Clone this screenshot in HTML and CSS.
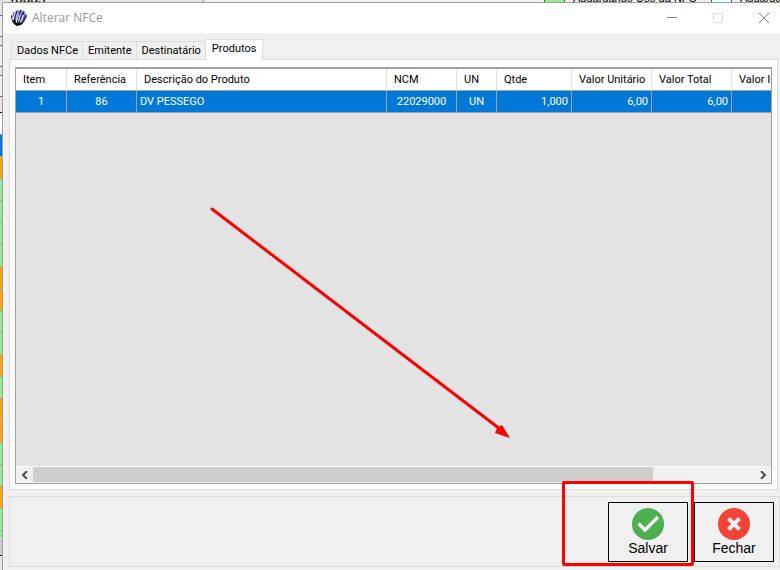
FILE: index.html
```
<!DOCTYPE html>
<html lang="pt-BR">
<head>
<meta charset="utf-8">
<title>Alterar NFCe</title>
<link rel="stylesheet" href="styles.css">
</head>
<body>
<div class="backdrop" aria-hidden="true">
  <div class="back-top">
    <span class="back-title">Todas</span>
    <span class="back-swatch green"></span>
    <span class="back-label">Aguardando Uso da NFC</span>
    <span class="back-swatch cyan"></span>
    <span class="back-label">Aguarda</span>
  </div>
  <div class="back-side">
    <i class="field"></i><i class="field"></i><i class="field"></i>
    <i class="rule"></i>
    <i class="row"></i><i class="row blue"></i><i class="row orange"></i>
    <i class="row green"></i><i class="row green"></i><i class="row green"></i><i class="row green"></i>
    <i class="row orange"></i><i class="row orange"></i>
    <i class="row green"></i><i class="row green"></i><i class="row orange"></i><i class="row green"></i>
    <i class="row orange"></i><i class="row orange"></i>
    <i class="row green"></i><i class="row green"></i><i class="row orange"></i><i class="row green"></i>
    <i class="row green last"></i><i class="bar"></i>
  </div>
</div>

<main class="window">
  <header class="titlebar">
    <svg class="logo" viewBox="0 0 16 16" aria-hidden="true">
      <path fill="#20207c" d="M5 1 7 0 5 6 4 11 2 13 3 7zM9 0l2 0-3 7-1 5-2 2 1-6zM12 1l2 1-3 6-1 5-2 1 1-6zM15 4l1 2-2 4-1 2-2 1 1-4z"/>
      <path fill="#5a5ab8" d="M2 3 4 2 3 6 1 9zM7 1l1 0-2 7-1 1zM11 1l1 1-3 6-1 1zM14 3l1 1-3 5-1 1z"/>
      <path fill="#000" d="M0 6 1 5 1 9 3 11 4 8 5 12 7 13 8 10 9 13 11 12 12 10 12 13 10 15 6 16 3 14 1 11z"/>
      <path stroke="#fff" stroke-width=".8" d="M2 10 4 3M5 13 8 4M9 13l3-8"/>
    </svg>
    <h1>Alterar NFCe</h1>
    <div class="controls">
      <button type="button" aria-label="Minimizar"><svg viewBox="0 0 12 12"><path d="M1 5.500H11"/></svg></button>
      <button type="button" aria-label="Maximizar" disabled><svg viewBox="0 0 12 12"><path d="M1.500 1.500H10.500V10.500H1.500z"/></svg></button>
      <button type="button" aria-label="Fechar janela"><svg viewBox="0 0 12 12"><path d="M1 1 11 11M11 1 1 11"/></svg></button>
    </div>
  </header>

  <div class="tabs" role="tablist">
    <button type="button" role="tab" class="tab">Dados NFCe</button>
    <button type="button" role="tab" class="tab">Emitente</button>
    <button type="button" role="tab" class="tab">Destinatário</button>
    <button type="button" role="tab" class="tab active" aria-selected="true">Produtos</button>
  </div>

  <section class="panel">
    <div class="grid">
      <div class="grid-view">
        <table>
          <colgroup>
            <col class="w-item"><col class="w-code"><col class="w-desc"><col class="w-code"><col class="w-un"><col class="w-qty"><col class="w-val"><col class="w-val"><col class="w-val">
          </colgroup>
          <thead>
            <tr><th>Item</th><th>Referência</th><th>Descrição do Produto</th><th>NCM</th><th>UN</th><th>Qtde</th><th>Valor Unitário</th><th>Valor Total</th><th>Valor ICMS</th></tr>
          </thead>
          <tbody>
            <tr><td class="mid">1</td><td class="mid">86</td><td>DV PESSEGO</td><td class="mid">22029000</td><td class="mid">UN</td><td class="num">1,000</td><td class="num">6,00</td><td class="num">6,00</td><td></td></tr>
          </tbody>
        </table>
      </div>
      <div class="scrollbar">
        <button type="button" aria-label="Rolar para a esquerda"><svg viewBox="0 0 8 8"><path d="M6 0 2 4 6 8"/></svg></button>
        <div class="track"><div class="thumb"></div></div>
        <button type="button" aria-label="Rolar para a direita"><svg viewBox="0 0 8 8"><path d="M2 0 6 4 2 8"/></svg></button>
      </div>
    </div>
  </section>

  <footer class="actions">
    <button type="button" class="action">
      <svg viewBox="0 0 32 32" aria-hidden="true"><circle cx="16" cy="16" r="16" fill="#4caf50"/><path d="M6.500 15.500 13 22 26 9" fill="none" stroke="#f0f0f0" stroke-width="3.400"/></svg>
      Salvar
    </button>
    <button type="button" class="action">
      <svg viewBox="0 0 32 32" aria-hidden="true"><circle cx="16" cy="16" r="16" fill="#f44336"/><path d="M10.500 10.500 21.500 21.500M21.500 10.500 10.500 21.500" stroke="#f0f0f0" stroke-width="4"/></svg>
      Fechar
    </button>
    <div class="highlight"></div>
  </footer>
</main>

<svg class="arrow" viewBox="0 0 300 232" aria-hidden="true">
  <path d="M2 2 290 222" stroke="#f00" stroke-width="3" stroke-linecap="round"/>
  <path d="M300 231 285 226 287 221 292 218z" fill="#f00"/>
</svg>
</body>
</html>
```
FILE: styles.css
```
* { box-sizing: border-box; }

body {
  margin: 0;
  min-height: 100vh;
  padding: 2px 0 0 2px;
  display: flex;
  position: relative;
  overflow: hidden;
  background: #e4e4e4;
  color: #000;
  font: 11px/16px Roboto, "Liberation Sans", sans-serif;
}

button {
  margin: 0;
  padding: 0;
  border: 0;
  background: none;
  color: inherit;
  font: inherit;
}

svg { display: block; }

/* Parent window, showing past the dialog's edges */
.backdrop {
  position: absolute;
  inset: 0;
  overflow: hidden;
}

.back-top {
  display: flex;
  align-items: flex-end;
  height: 2px;
  background: linear-gradient(to right, #e4e4e4 203px, #999 203px, #999 204px, #f0f0f0 204px);
  font: 11px/14px "Liberation Sans", sans-serif;
}

.back-title {
  flex: none;
  width: 544px;
  padding-left: 8px;
  font-size: 14px;
}

.back-title, .back-label { margin-bottom: -3px; }

.back-label { flex: none; width: 146px; padding-left: 8px; white-space: nowrap; overflow: hidden; }

.back-swatch {
  flex: none;
  width: 21px;
  height: 2px;
  border: solid #555;
  border-width: 0 1px;
}

.back-swatch.green { background: #90ee90; }
.back-swatch.cyan { background: #e0ffff; }

.back-side {
  display: flex;
  flex-direction: column;
  width: 3px;
  padding-top: 13px;
}

.back-side i { flex: none; }
.field { height: 22px; margin-bottom: 8px; border: 1px solid #666; border-left: 0; background: #eee; }
.rule { height: 8px; border-bottom: 1px solid #000; }
.row { height: 22px; border-bottom: 1px solid #a0a0a0; background: #fff; }
.row.blue { background: #0078d7; }
.row.orange { background: #ffa500; }
.row.green { background: #90ee90; }
.row.last { height: 8px; border-bottom-color: #fff; }
.bar { height: 17px; border-bottom: 1px solid #000; background: #cdcdcd; }

.window {
  position: relative;
  flex: 1;
  min-width: 0;
  display: flex;
  flex-direction: column;
  border: solid #a0a0a0;
  border-width: 1px 0 0 1px;
  background: #f0f0f0;
}

.titlebar {
  display: flex;
  align-items: center;
  height: 30px;
  padding-left: 8px;
  background: #fff;
}

.logo { width: 16px; height: 16px; }

.titlebar h1 {
  flex: 1;
  margin: 0 0 0 5px;
  color: #999;
  font: 12px/16px "Open Sans", sans-serif;
}

.controls { display: flex; }

.controls button {
  display: grid;
  place-items: center;
  width: 46px;
  height: 30px;
}

.controls button:last-child { margin-right: -7px; }
.controls svg { width: 12px; height: 12px; fill: none; stroke: #888; }
.controls button:disabled svg { stroke: #ddd; }

.tabs {
  display: flex;
  align-items: flex-end;
  margin: 6px 0 0 8px;
}

.tab {
  height: 18px;
  padding: 0 4px 0 5px;
  border: 1px solid #dcdcdc;
  border-width: 1px 1px 0 0;
}

.tab:first-child { border-left-width: 1px; }

.tab.active {
  position: relative;
  height: 21px;
  margin-bottom: -1px;
  padding: 0 6px 2px;
  background: #fff;
}

.panel {
  flex: 1;
  display: flex;
  margin: 0 2px 0 6px;
  padding: 7px 5px 5px;
  border: 1px solid #dcdcdc;
  background: #fff;
}

.grid {
  flex: 1;
  min-width: 0;
  display: flex;
  flex-direction: column;
  border: 1px solid #a0a0a0;
  border-top-width: 2px;
  background: #e3e3e3;
}

.grid-view { flex: 1; overflow: hidden; }

table {
  width: 796px;
  table-layout: fixed;
  border-collapse: separate;
  border-spacing: 0;
}

.w-item { width: 51px; }
.w-code { width: 70px; }
.w-desc { width: 250px; }
.w-un { width: 40px; }
.w-qty { width: 75px; }
.w-val { width: 80px; }

th, td {
  height: 22px;
  padding: 0 3px;
  border: solid #a0a0a0;
  border-width: 0 1px 1px 0;
  text-align: left;
  font-weight: 400;
  white-space: nowrap;
}

th {
  padding: 0 7px;
  border-right-color: #e0e0e0;
  background: #fff;
}

td { background: #0078d7; color: #fff; }
.mid { text-align: center; }
.num { text-align: right; }

.scrollbar {
  display: flex;
  height: 17px;
  border-top: 1px solid #fff;
  background: #f0f0f0;
}

.scrollbar button { display: grid; place-items: center; width: 17px; }
.scrollbar svg { width: 8px; height: 8px; fill: none; stroke: #505050; stroke-width: 2; }
.track { flex: 1; }
.thumb { width: 86%; height: 15px; background: #cdcdcd; }

.actions {
  position: relative;
  display: flex;
  justify-content: flex-end;
  gap: 6px;
  margin: 6px 0 3px 6px;
  padding: 5px 5px 4px;
  border: 1px solid #dcdcdc;
}

.action {
  display: flex;
  flex-direction: column;
  align-items: center;
  width: 80px;
  height: 60px;
  padding-top: 5px;
  border: 1px solid #000;
  font: 14px/16px "Liberation Sans", sans-serif;
}

.action svg { width: 32px; height: 32px; }

/* Annotations over the dialog */
.highlight {
  position: absolute;
  top: -16px;
  right: 85px;
  width: 132px;
  height: 85px;
  border: 3px solid #f00;
  border-radius: 2px;
}

.arrow {
  position: absolute;
  left: 210px;
  top: 207px;
  width: 300px;
  height: 232px;
}
```
